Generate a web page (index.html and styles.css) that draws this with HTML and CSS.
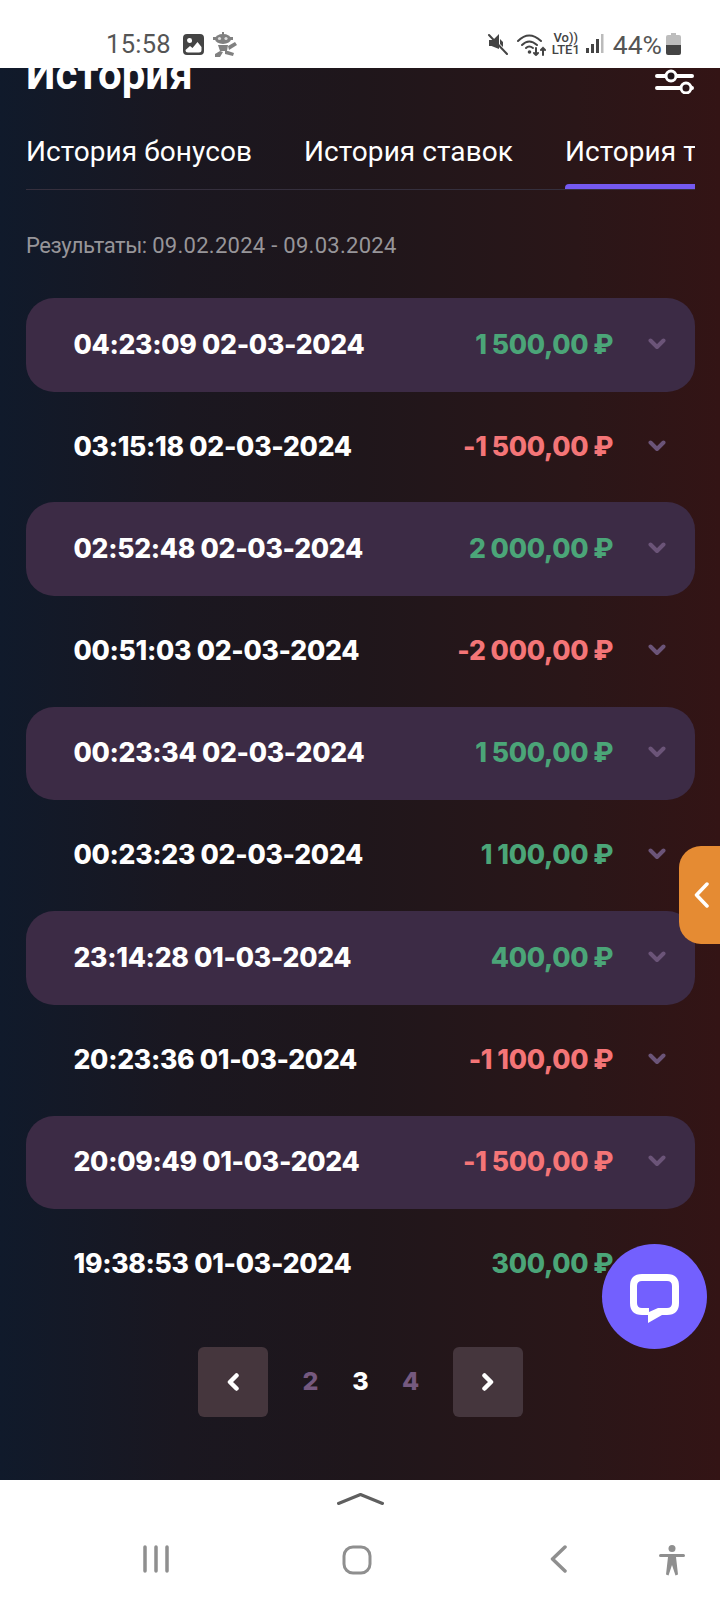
FILE: index.html
```html
<!DOCTYPE html>
<html lang="en">
<head>
    <meta charset="UTF-8">
    <meta name="viewport" content="width=device-width, initial-scale=1.0">
    <title>История</title>
    <link rel="stylesheet" href="styles.css">
</head>
<body>
    <div class="status-bar">
        <div class="status-left">
            <span class="clock">15:58</span>
            <svg class="st-icon" width="21" height="21" viewBox="0 0 21 21"><path fill-rule="evenodd" fill="#444" d="M4 0H17Q21 0 21 4V17Q21 21 17 21H4Q0 21 0 17V4Q0 0 4 0ZM6.5 4A2.5 2.5 0 1 0 6.6 9 2.5 2.5 0 0 0 6.5 4ZM2.5 16Q2.5 18.5 5 18.5H16Q18.5 18.5 18.5 16V13L14.5 8 9.5 14 7 12Z"/></svg>
            <svg class="st-icon robot" width="25" height="25" viewBox="0 0 25 25"><g fill="#808080"><ellipse cx="11" cy="7" rx="8" ry="5"/><rect x="10" y="0" width="2" height="3"/><rect x="1" y="5" width="20" height="3"/><path d="M6 13H16L15 19H8Z"/><path d="M16 14L23 10 25 13 17 18Z"/><path d="M3 22L8 19 11 20 8 25H3Z"/><path d="M13 19H16L22 21 21 24 13 22Z"/></g><circle cx="7.5" cy="6.5" r="1.6" fill="#ddd"/><circle cx="14" cy="6.5" r="1.6" fill="#ddd"/></svg>
        </div>
        <div class="status-right">
            <svg width="21" height="22" viewBox="0 0 21 22"><path fill="#444" d="M2 7H6L12 1V16L4.5 13H2ZM13 6L16 9V14L13 11Z"/><path stroke="#444" stroke-width="2" stroke-linecap="round" d="M2 2L20 21"/></svg>
            <svg class="st-wifi" width="29" height="23" viewBox="0 0 29 23"><g fill="none" stroke="#444" stroke-width="2" stroke-linecap="round"><path d="M1 8Q12 -3 24 8"/><path d="M5 12Q12 5 20 12"/><path d="M9 15Q12 12 16 15"/><path d="M19 15V22M17 20L19 22 21 20"/><path d="M26 22V15M24 17L26 15 28 17"/></g><circle cx="12.5" cy="19" r="1.8" fill="#444"/></svg>
            <div class="lte"><span>Vo))</span><span>LTE1</span></div>
            <svg class="st-signal" width="18" height="20" viewBox="0 0 18 20"><rect x="0" y="14" width="3" height="5" fill="#444"/><rect x="5" y="10" width="3" height="9" fill="#444"/><rect x="10" y="5" width="3" height="14" fill="#444"/><rect x="15" y="0" width="2.5" height="19" fill="#bbb"/></svg>
            <span class="battery-pct">44%</span>
            <svg width="15" height="22" viewBox="0 0 15 22"><path fill="#bdbdbd" d="M5 0H10V2H13Q15 2 15 4V12H0V4Q0 2 2 2H5Z"/><path fill="#444" d="M0 12H15V20Q15 22 13 22H2Q0 22 0 20Z"/></svg>
        </div>
    </div>

    <div class="main">
        <div class="title-row">
            <h1>История</h1>
            <svg width="40" height="26" viewBox="0 0 40 26"><g stroke="#fff" stroke-width="4" stroke-linecap="round" fill="none"><path d="M2 8H37M2 20H37"/></g><circle cx="16" cy="8" r="5" fill="#1f1519" stroke="#fff" stroke-width="3"/><circle cx="31" cy="20" r="5" fill="#2a1518" stroke="#fff" stroke-width="3"/></svg>
        </div>

        <div class="tabs">
            <a class="tab">История бонусов</a>
            <a class="tab">История ставок</a>
            <a class="tab active">История транзакций</a>
        </div>

        <div class="results"><span class="results-label">Результаты:</span> <span class="results-dates">09.02.2024 - 09.03.2024</span></div>

        <div class="history">
            <div class="row band"><span class="when">04:23:09 02-03-2024</span><span class="sum plus">1 500,00 ₽</span><svg class="chev" viewBox="0 0 18 12"><path d="M2.5 2.5L9 9L15.5 2.5"/></svg></div>
            <div class="row"><span class="when">03:15:18 02-03-2024</span><span class="sum minus">-1 500,00 ₽</span><svg class="chev" viewBox="0 0 18 12"><path d="M2.5 2.5L9 9L15.5 2.5"/></svg></div>
            <div class="row band"><span class="when">02:52:48 02-03-2024</span><span class="sum plus">2 000,00 ₽</span><svg class="chev" viewBox="0 0 18 12"><path d="M2.5 2.5L9 9L15.5 2.5"/></svg></div>
            <div class="row"><span class="when">00:51:03 02-03-2024</span><span class="sum minus">-2 000,00 ₽</span><svg class="chev" viewBox="0 0 18 12"><path d="M2.5 2.5L9 9L15.5 2.5"/></svg></div>
            <div class="row band"><span class="when">00:23:34 02-03-2024</span><span class="sum plus">1 500,00 ₽</span><svg class="chev" viewBox="0 0 18 12"><path d="M2.5 2.5L9 9L15.5 2.5"/></svg></div>
            <div class="row"><span class="when">00:23:23 02-03-2024</span><span class="sum plus">1 100,00 ₽</span><svg class="chev" viewBox="0 0 18 12"><path d="M2.5 2.5L9 9L15.5 2.5"/></svg></div>
            <div class="row band"><span class="when">23:14:28 01-03-2024</span><span class="sum plus">400,00 ₽</span><svg class="chev" viewBox="0 0 18 12"><path d="M2.5 2.5L9 9L15.5 2.5"/></svg></div>
            <div class="row"><span class="when">20:23:36 01-03-2024</span><span class="sum minus">-1 100,00 ₽</span><svg class="chev" viewBox="0 0 18 12"><path d="M2.5 2.5L9 9L15.5 2.5"/></svg></div>
            <div class="row band"><span class="when">20:09:49 01-03-2024</span><span class="sum minus">-1 500,00 ₽</span><svg class="chev" viewBox="0 0 18 12"><path d="M2.5 2.5L9 9L15.5 2.5"/></svg></div>
            <div class="row"><span class="when">19:38:53 01-03-2024</span><span class="sum plus">300,00 ₽</span><svg class="chev" viewBox="0 0 18 12"><path d="M2.5 2.5L9 9L15.5 2.5"/></svg></div>
        </div>

        <div class="pager">
            <a class="page-btn"><svg width="14" height="18" viewBox="0 0 14 18"><path d="M10.5 2.5L4 9L10.5 15.5"/></svg></a>
            <div class="page-nums">
                <a class="num">2</a>
                <a class="num current">3</a>
                <a class="num">4</a>
            </div>
            <a class="page-btn"><svg width="14" height="18" viewBox="0 0 14 18"><path d="M3.5 2.5L10 9L3.5 15.5"/></svg></a>
        </div>

        <div class="side-tab"><svg width="15" height="26" viewBox="0 0 15 26"><path d="M13 2L2.5 13L13 24"/></svg></div>
        <div class="chat-btn"><svg width="50" height="50" viewBox="0 0 50 50"><path fill="#fff" fill-rule="evenodd" d="M12 0H37Q49 0 49 12V29Q49 41 37 41H32L18 49V41H12Q0 41 0 29V12Q0 0 12 0ZM12 7Q7 7 7 12V29Q7 34 12 34H19V38L28 34H37Q42 34 42 29V12Q42 7 37 7Z"/></svg></div>
    </div>

    <div class="nav-bar">
        <svg class="caret" width="47" height="12" viewBox="0 0 47 12"><path d="M1.5 10.5L23.5 1.5L45.5 10.5"/></svg>
        <div class="nav-icons">
            <svg class="nav-menu" width="26" height="28" viewBox="0 0 26 28"><path d="M2 2V26M13 2V26M24 2V26"/></svg>
            <svg class="nav-home" width="30" height="30" viewBox="0 0 30 30"><rect x="2" y="2" width="26" height="26" rx="9"/></svg>
            <svg class="nav-back" width="17" height="28" viewBox="0 0 17 28"><path d="M15 2L2.5 14L15 26"/></svg>
            <svg class="nav-access" width="26" height="31" viewBox="0 0 26 31"><circle cx="13" cy="3.5" r="3.5" fill="#8f8f8f"/><path fill="#8f8f8f" d="M1.5 9H24.5A1.3 1.3 0 0 1 24.5 12H17L19 29.5 16.5 30.5 13 20 9.5 30.5 7 29.5 9 12H1.5A1.3 1.3 0 0 1 1.5 9Z"/></svg>
        </div>
    </div>
</body>
</html>
```

FILE: styles.css
```css
* {
    margin: 0;
    padding: 0;
    box-sizing: border-box;
}

body {
    width: 720px;
    height: 1600px;
    font-family: 'Roboto', sans-serif;
    display: flex;
    flex-direction: column;
    overflow: hidden;
    background: #fff;
}

.status-bar {
    height: 68px;
    flex-shrink: 0;
    background: #fff;
    display: flex;
    justify-content: space-between;
    align-items: center;
    padding: 20px 39px 0 106px;
    position: relative;
    z-index: 2;
}

.status-left,
.status-right {
    display: flex;
    align-items: center;
}

.clock {
    font-size: 25.5px;
    color: #555;
    letter-spacing: 0.3px;
    margin-right: 12px;
}

.robot {
    margin-left: 8px;
}

.st-wifi {
    margin-left: 9px;
}

.lte {
    display: flex;
    flex-direction: column;
    align-items: center;
    font-size: 13px;
    line-height: 12px;
    font-weight: 500;
    color: #444;
    margin-left: 6px;
}

.st-signal {
    margin-left: 6px;
}

.battery-pct {
    font-size: 26.5px;
    color: #555;
    margin-left: 9px;
    margin-right: 4px;
}

.main {
    flex: 1;
    position: relative;
    overflow: hidden;
    padding: 0 25px 0 26px;
    background: linear-gradient(90deg, #101a2b 0%, #1a1720 25%, #1f161b 50%, #2a1618 80%, #331415 100%);
    color: #fff;
}

.title-row {
    margin-top: -15px;
    height: 44px;
    display: flex;
    justify-content: space-between;
    align-items: center;
}

.title-row h1 {
    font-size: 42px;
    font-weight: 700;
    line-height: 44px;
}

.title-row svg {
    margin-top: 11px;
}

.tabs {
    margin-top: 33px;
    display: flex;
    gap: 52px;
    overflow: hidden;
    border-bottom: 1px solid #352f3d;
    white-space: nowrap;
}

.tab {
    position: relative;
    font-size: 28px;
    letter-spacing: 0.07px;
    line-height: 44px;
    padding-bottom: 15px;
    color: #fff;
}

.tab.active::after {
    content: "";
    position: absolute;
    left: 0;
    right: 0;
    bottom: 0;
    height: 5px;
    background: #7459f0;
    border-radius: 4px 0 0 0;
}

.results {
    margin-top: 41px;
    font-size: 22px;
    line-height: 30px;
    color: #979599;
}

.results-label {
    letter-spacing: -0.45px;
}

.results-dates {
    letter-spacing: 0.28px;
}

.history {
    margin-top: 37px;
    display: flex;
    flex-direction: column;
    gap: 8.7px;
}

.row {
    height: 93.5px;
    display: flex;
    align-items: center;
    padding: 0 29px 2.5px 47.5px;
    border-radius: 28px;
    font-family: 'Inter', sans-serif;
    font-weight: 800;
    font-size: 26.5px;
    letter-spacing: -0.3px;
}

.row.band {
    background: #3c2b45;
}

.sum {
    margin-left: auto;
    margin-right: 35px;
    word-spacing: -0.5px;
}

.plus {
    color: #4ba578;
}

.minus {
    color: #f47577;
}

.chev {
    width: 18px;
    height: 12px;
    flex-shrink: 0;
}

.chev path {
    fill: none;
    stroke: #6b5478;
    stroke-width: 4;
    stroke-linecap: round;
    stroke-linejoin: round;
}

.pager {
    margin-top: 35.7px;
    display: flex;
    justify-content: center;
    align-items: center;
}

.page-btn {
    width: 70px;
    height: 70px;
    border-radius: 6px;
    background: #45363d;
    display: flex;
    align-items: center;
    justify-content: center;
}

.page-btn path {
    fill: none;
    stroke: #fff;
    stroke-width: 4.5;
    stroke-linecap: round;
    stroke-linejoin: round;
}

.page-nums {
    display: flex;
    margin: 0 17.5px;
    padding-bottom: 2px;
}

.num {
    width: 50px;
    text-align: center;
    font-family: 'Inter', sans-serif;
    font-weight: 800;
    font-size: 25px;
    color: #75597f;
}

.num.current {
    color: #fff;
}

.side-tab {
    position: absolute;
    right: 0;
    top: 778px;
    width: 41px;
    height: 98px;
    background: #e58b33;
    border-radius: 22px 0 0 22px;
    display: flex;
    align-items: center;
    padding-left: 15px;
}

.side-tab path {
    fill: none;
    stroke: #fff;
    stroke-width: 3.5;
    stroke-linecap: round;
    stroke-linejoin: round;
}

.chat-btn {
    position: absolute;
    left: 602px;
    top: 1176px;
    width: 105px;
    height: 105px;
    border-radius: 50%;
    background: #7360fe;
    display: flex;
    align-items: center;
    justify-content: center;
}

.chat-btn svg {
    margin: 5px 0 0 1px;
}

.nav-bar {
    height: 120px;
    flex-shrink: 0;
    background: #fff;
    display: flex;
    flex-direction: column;
    align-items: center;
    padding-top: 13px;
}

.caret path {
    fill: none;
    stroke: #5f5f5f;
    stroke-width: 3;
    stroke-linecap: round;
    stroke-linejoin: round;
}

.nav-icons {
    width: 100%;
    margin-top: 40px;
    display: flex;
    align-items: flex-start;
    padding-left: 143px;
}

.nav-icons path,
.nav-icons rect {
    stroke-linecap: round;
    stroke-linejoin: round;
}

.nav-menu path,
.nav-back path {
    fill: none;
    stroke: #8f8f8f;
    stroke-width: 3.5;
}

.nav-home rect {
    fill: none;
    stroke: #8f8f8f;
    stroke-width: 3;
}

.nav-home {
    margin-left: 173px;
}

.nav-back {
    margin-left: 178px;
}

.nav-access {
    margin-left: 92px;
}
```
